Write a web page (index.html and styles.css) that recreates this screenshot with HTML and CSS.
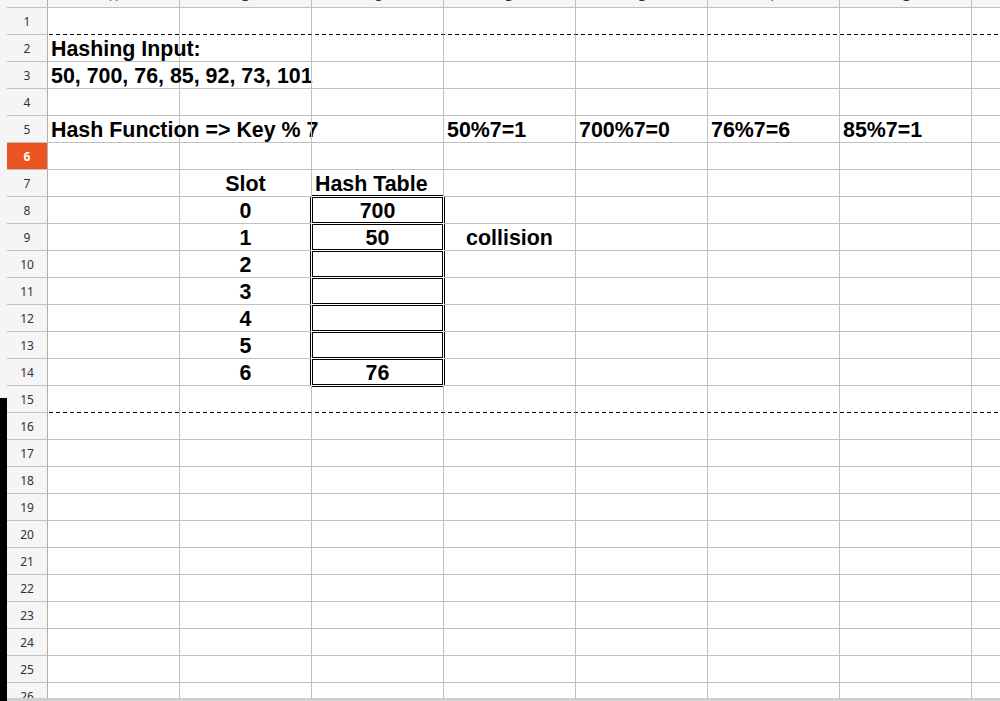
FILE: index.html
```html
<!DOCTYPE html>
<html>
<head>
<meta charset="utf-8">
<link rel="stylesheet" href="styles.css">
</head>
<body>
<div class="screen">
  <div class="strip"><div class="strip-top"></div><div class="strip-edge"></div></div>
  <div class="main">
    <div class="sheet">
      <div class="colhead">
        <div class="ch corner"></div>
        <div class="ch">A</div><div class="ch">B</div><div class="ch">C</div><div class="ch">D</div>
        <div class="ch">E</div><div class="ch">F</div><div class="ch">G</div><div class="ch">H</div>
      </div>
      <div class="row pb"><div class="rh">1</div><div class="c"></div><div class="c"></div><div class="c"></div><div class="c"></div><div class="c"></div><div class="c"></div><div class="c"></div><div class="c"></div></div>
      <div class="row"><div class="rh">2</div><div class="c">Hashing Input:</div><div class="c"></div><div class="c"></div><div class="c"></div><div class="c"></div><div class="c"></div><div class="c"></div><div class="c"></div></div>
      <div class="row"><div class="rh">3</div><div class="c">50, 700, 76, 85, 92, 73, 101</div><div class="c"></div><div class="c"></div><div class="c"></div><div class="c"></div><div class="c"></div><div class="c"></div><div class="c"></div></div>
      <div class="row"><div class="rh">4</div><div class="c"></div><div class="c"></div><div class="c"></div><div class="c"></div><div class="c"></div><div class="c"></div><div class="c"></div><div class="c"></div></div>
      <div class="row"><div class="rh">5</div><div class="c">Hash Function =&gt; Key % 7</div><div class="c"></div><div class="c"></div><div class="c">50%7=1</div><div class="c">700%7=0</div><div class="c">76%7=6</div><div class="c">85%7=1</div><div class="c"></div></div>
      <div class="row"><div class="rh sel">6</div><div class="c"></div><div class="c"></div><div class="c"></div><div class="c"></div><div class="c"></div><div class="c"></div><div class="c"></div><div class="c"></div></div>
      <div class="row"><div class="rh">7</div><div class="c"></div><div class="c ctr">Slot</div><div class="c ht">Hash Table</div><div class="c"></div><div class="c"></div><div class="c"></div><div class="c"></div><div class="c"></div></div>
      <div class="row"><div class="rh">8</div><div class="c"></div><div class="c ctr hb">0</div><div class="c ctr hc">700</div><div class="c hd"></div><div class="c"></div><div class="c"></div><div class="c"></div><div class="c"></div></div>
      <div class="row"><div class="rh">9</div><div class="c"></div><div class="c ctr hb">1</div><div class="c ctr hc">50</div><div class="c ctr hd">collision</div><div class="c"></div><div class="c"></div><div class="c"></div><div class="c"></div></div>
      <div class="row"><div class="rh">10</div><div class="c"></div><div class="c ctr hb">2</div><div class="c ctr hc"></div><div class="c hd"></div><div class="c"></div><div class="c"></div><div class="c"></div><div class="c"></div></div>
      <div class="row"><div class="rh">11</div><div class="c"></div><div class="c ctr hb">3</div><div class="c ctr hc"></div><div class="c hd"></div><div class="c"></div><div class="c"></div><div class="c"></div><div class="c"></div></div>
      <div class="row"><div class="rh">12</div><div class="c"></div><div class="c ctr hb">4</div><div class="c ctr hc"></div><div class="c hd"></div><div class="c"></div><div class="c"></div><div class="c"></div><div class="c"></div></div>
      <div class="row"><div class="rh">13</div><div class="c"></div><div class="c ctr hb">5</div><div class="c ctr hc"></div><div class="c hd"></div><div class="c"></div><div class="c"></div><div class="c"></div><div class="c"></div></div>
      <div class="row"><div class="rh">14</div><div class="c"></div><div class="c ctr hb">6</div><div class="c ctr hc">76</div><div class="c hd"></div><div class="c"></div><div class="c"></div><div class="c"></div><div class="c"></div></div>
      <div class="row pb"><div class="rh">15</div><div class="c"></div><div class="c"></div><div class="c hu"></div><div class="c"></div><div class="c"></div><div class="c"></div><div class="c"></div><div class="c"></div></div>
      <div class="row"><div class="rh">16</div><div class="c"></div><div class="c"></div><div class="c"></div><div class="c"></div><div class="c"></div><div class="c"></div><div class="c"></div><div class="c"></div></div>
      <div class="row"><div class="rh">17</div><div class="c"></div><div class="c"></div><div class="c"></div><div class="c"></div><div class="c"></div><div class="c"></div><div class="c"></div><div class="c"></div></div>
      <div class="row"><div class="rh">18</div><div class="c"></div><div class="c"></div><div class="c"></div><div class="c"></div><div class="c"></div><div class="c"></div><div class="c"></div><div class="c"></div></div>
      <div class="row"><div class="rh">19</div><div class="c"></div><div class="c"></div><div class="c"></div><div class="c"></div><div class="c"></div><div class="c"></div><div class="c"></div><div class="c"></div></div>
      <div class="row"><div class="rh">20</div><div class="c"></div><div class="c"></div><div class="c"></div><div class="c"></div><div class="c"></div><div class="c"></div><div class="c"></div><div class="c"></div></div>
      <div class="row"><div class="rh">21</div><div class="c"></div><div class="c"></div><div class="c"></div><div class="c"></div><div class="c"></div><div class="c"></div><div class="c"></div><div class="c"></div></div>
      <div class="row"><div class="rh">22</div><div class="c"></div><div class="c"></div><div class="c"></div><div class="c"></div><div class="c"></div><div class="c"></div><div class="c"></div><div class="c"></div></div>
      <div class="row"><div class="rh">23</div><div class="c"></div><div class="c"></div><div class="c"></div><div class="c"></div><div class="c"></div><div class="c"></div><div class="c"></div><div class="c"></div></div>
      <div class="row"><div class="rh">24</div><div class="c"></div><div class="c"></div><div class="c"></div><div class="c"></div><div class="c"></div><div class="c"></div><div class="c"></div><div class="c"></div></div>
      <div class="row"><div class="rh">25</div><div class="c"></div><div class="c"></div><div class="c"></div><div class="c"></div><div class="c"></div><div class="c"></div><div class="c"></div><div class="c"></div></div>
      <div class="row"><div class="rh">26</div><div class="c"></div><div class="c"></div><div class="c"></div><div class="c"></div><div class="c"></div><div class="c"></div><div class="c"></div><div class="c"></div></div>
    </div>
    <div class="hbar"></div>
  </div>
</div>
</body>
</html>
```

FILE: styles.css
```css
html, body {
  margin: 0;
  padding: 0;
  background: #fff;
  overflow: hidden;
}
body {
  font-family: "Liberation Sans", Arial, sans-serif;
}
.screen {
  display: flex;
  width: 1000px;
  height: 701px;
  overflow: hidden;
}
.strip {
  flex: none;
  width: 7px;
  display: flex;
  flex-direction: column;
  background: #f5f5f5;
}
.strip-top {
  height: 398px;
  flex: none;
}
.strip-edge {
  flex: 1;
  background: #000;
}
.main {
  flex: 1;
  min-width: 0;
  display: flex;
  flex-direction: column;
}
.sheet {
  height: 698px;
  flex: none;
  overflow: hidden;
}
.hbar {
  height: 3px;
  background: #cfcfcf;
}
.colhead {
  display: flex;
  height: 20px;
  margin-top: -13px;
  background: #f5f5f5;
  border-bottom: 1px solid #c0c0c0;
}
.ch {
  flex: none;
  width: 132px;
  box-sizing: border-box;
  border-right: 1px solid #c0c0c0;
  font-family: "Noto Sans", "DejaVu Sans", sans-serif;
  font-size: 12px;
  line-height: 20px;
  color: #333;
  text-align: center;
}
.ch.corner {
  width: 41px;
  border-right-color: #b0b0b0;
}
.row {
  display: flex;
  height: 27px;
}
.row.pb {
  background: repeating-linear-gradient(90deg, #000 0 4px, transparent 4px 7px) left bottom / 100% 1px no-repeat;
}
.rh {
  flex: none;
  width: 41px;
  box-sizing: border-box;
  background: #f5f5f5;
  border-right: 1px solid #b0b0b0;
  border-bottom: 1px solid #c0c0c0;
  display: flex;
  align-items: center;
  justify-content: center;
  font-family: "Noto Sans", "DejaVu Sans", sans-serif;
  font-size: 12px;
  color: #333;
  padding-top: 1px;
}
.rh.sel {
  background: #e95420;
  color: #fff;
  font-weight: bold;
}
.c {
  flex: none;
  width: 132px;
  box-sizing: border-box;
  border-right: 1px solid #c0c0c0;
  border-bottom: 1px solid #c0c0c0;
  padding: 0 3px;
  display: flex;
  align-items: flex-end;
  white-space: nowrap;
  font-size: 21.4px;
  font-weight: bold;
  line-height: 23px;
  color: #000;
}
.row.pb .c {
  border-bottom-color: transparent;
}
.c.ctr {
  justify-content: center;
}
.c.ht {
  border-bottom-color: #fff;
  box-shadow: inset 0 -1px 0 #000;
}
.c.hb {
  border-right-color: #fff;
  box-shadow: inset -1px 0 0 #000;
}
.c.hc {
  border-right-color: #fff;
  border-bottom-color: #fff;
  box-shadow: inset 0 0 0 1px #000;
}
.c.hd {
  box-shadow: inset 1px 0 0 #000;
}
.c.hu {
  box-shadow: inset 0 1px 0 #000;
}
```
